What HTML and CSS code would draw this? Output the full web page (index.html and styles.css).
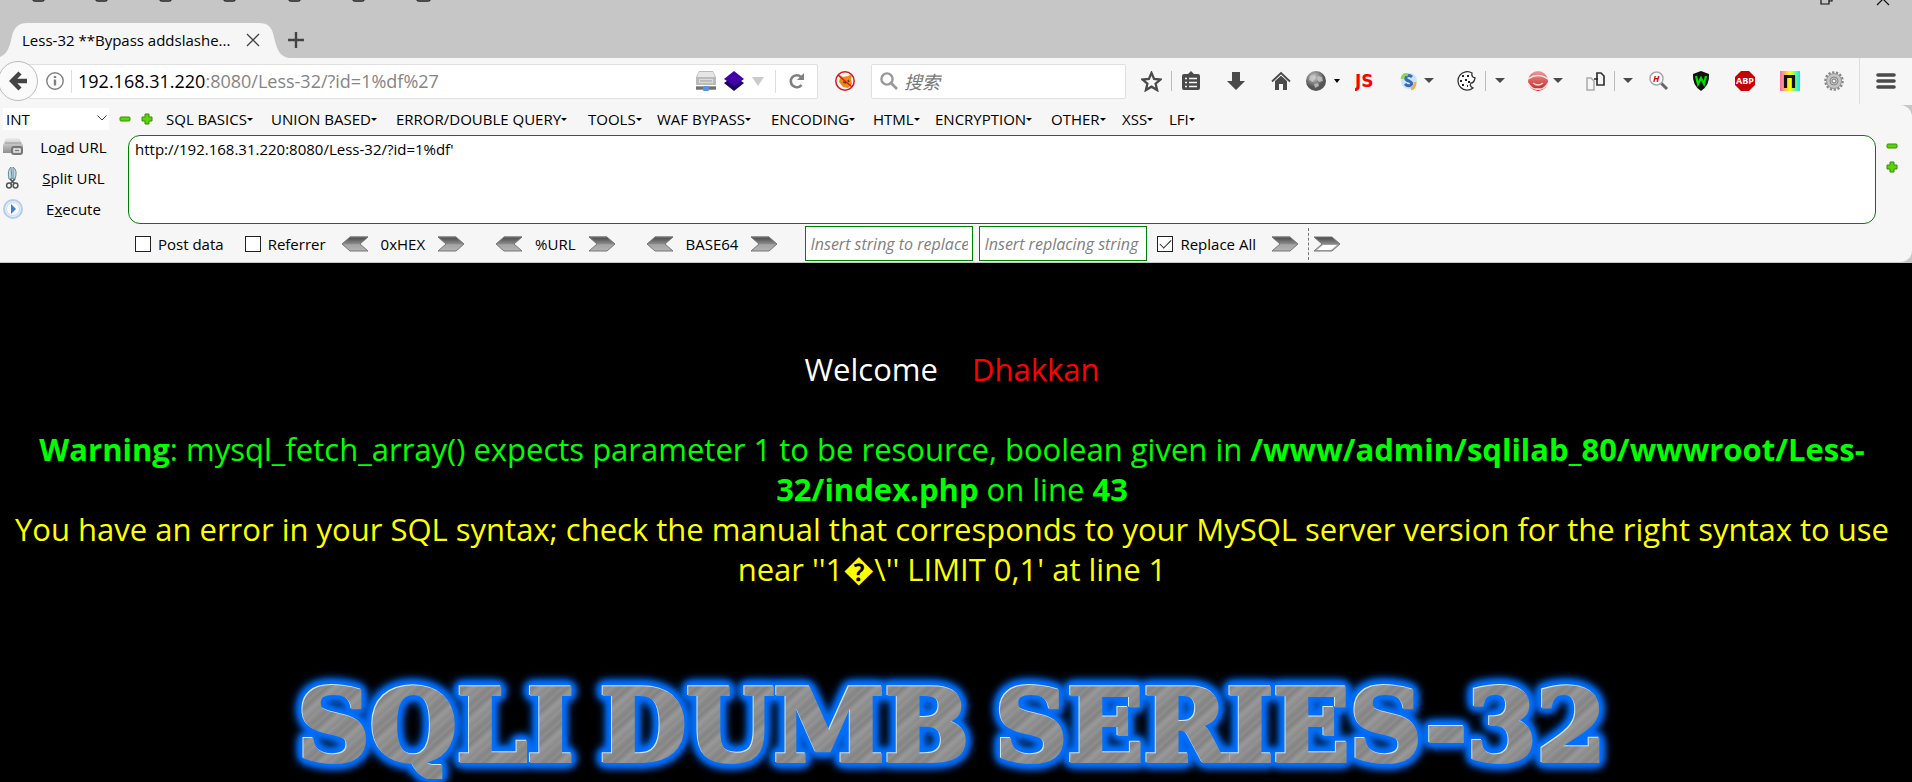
FILE: index.html
```html
<!DOCTYPE html>
<html lang="en">
<head>
<meta charset="utf-8">
<title>Less-32 **Bypass addslashes()**</title>
<link rel="stylesheet" href="styles.css">
</head>
<body>
<svg class="defs" aria-hidden="true">
  <defs>
    <linearGradient id="steel" x1="0" y1="0" x2="0" y2="1"><stop offset="0" stop-color="#484848"/><stop offset=".48" stop-color="#888"/><stop offset=".55" stop-color="#a4a4a4"/><stop offset="1" stop-color="#b4b4b4"/></linearGradient>
    <linearGradient id="metal" x1="0" y1="0" x2="0" y2="1"><stop offset="0" stop-color="#eee"/><stop offset="1" stop-color="#8d8d8d"/></linearGradient>
    <linearGradient id="redball" x1="0" y1="0" x2="0" y2="1"><stop offset="0" stop-color="#e99"/><stop offset="1" stop-color="#c4201c"/></linearGradient>
    <linearGradient id="rainbow"><stop offset="0" stop-color="#ff6bb0"/><stop offset=".5" stop-color="#ffff00"/><stop offset="1" stop-color="#00eaff"/></linearGradient>
    <radialGradient id="ball" cx=".4" cy=".3"><stop offset="0" stop-color="#ccc"/><stop offset="1" stop-color="#555"/></radialGradient>
    <symbol id="arrow" viewBox="0 0 28 16"><path d="M1 1H19L27 8L19 15H1L9 8Z" fill="url(#steel)" stroke="#777"/><path d="M1 1H19" stroke="#777"/></symbol>
    <symbol id="arrow-open" viewBox="0 0 28 16"><path d="M1 1H19L27 8L19 15H1L9 8Z" fill="url(#steel)" stroke="#777"/><path d="M10 9H24L18 14H4Z" fill="#fff"/></symbol>
    <symbol id="minus" viewBox="0 0 12 12"><rect x="1" y="4" width="10" height="4" rx="1" fill="#58d800" stroke="#3c8a10"/></symbol>
    <symbol id="plus" viewBox="0 0 12 12"><path d="M4 1H8V4H11V8H8V11H4V8H1V4H4Z" fill="#58d800" stroke="#3c8a10" stroke-linejoin="round"/></symbol>
    <symbol id="drop" viewBox="0 0 10 6"><path d="M0 0H10L5 5Z" fill="#4a4a4a"/></symbol>
  </defs>
</svg>

<header class="titlebar">
  <svg class="clipped-icons" width="400" height="3" viewBox="0 0 400 3" fill="none" stroke="#222" stroke-width="1.3"><path d="M1 0Q1 1 3 1H10Q12 1 12 0M64 0Q64 1 66 1H73Q75 1 75 0M128 0Q128 1 130 1H137Q139 1 139 0M192 0Q192 1 194 1H201Q203 1 203 0M257 0Q257 1 259 1H266Q268 1 268 0M321 0Q321 1 323 1H330Q332 1 332 0M385 0Q385 1 387 1H396Q398 1 398 0"/></svg>
  <svg class="window-controls" width="72" height="6" viewBox="0 0 72 6" fill="none" stroke="#111" stroke-width="1.2"><path d="M1 0V4H9V0M9 1H12V0M57 5L63 -1L69 5"/></svg>
  <div class="tab">
    <svg class="tab-shape" width="292" height="35" viewBox="0 0 292 35"><path d="M0 35V34C8 31 10 22 12 13C14 4 19 0 27 0H259C268 0 272 4 274 14C277 27 280 35 292 35Z" fill="#f6f6f6"/></svg>
    <span class="tab-title">Less-32 **Bypass addslashe...</span>
    <button class="plain" aria-label="Close tab"><svg width="14" height="14" viewBox="0 0 14 14"><path d="M1 1L13 13M13 1L1 13" stroke="#444" stroke-width="1.3"/></svg></button>
  </div>
  <button class="plain new-tab" aria-label="New tab"><svg width="16" height="16" viewBox="0 0 16 16"><path d="M8 0V16M0 8H16" stroke="#444" stroke-width="2.4"/></svg></button>
</header>

<nav class="navbar">
  <button class="plain back" aria-label="Back"><svg width="19" height="20" viewBox="0 0 19 20"><path d="M11 2L3 10L11 18M3 10H18" fill="none" stroke="#444" stroke-width="4.4"/></svg></button>
  <div class="urlbar">
    <button class="plain" aria-label="Site information"><svg width="18" height="18" viewBox="0 0 18 18"><circle cx="9" cy="9" r="8.2" fill="none" stroke="#808080" stroke-width="1.4"/><path d="M9 7.5V13.5M9 4V6" stroke="#808080" stroke-width="2.4"/></svg></button>
    <div class="url-text"><span>192.168.31.220</span>:8080/Less-32/?id=1%df%27</div>
    <div class="url-icons">
      <svg width="20" height="20" viewBox="0 0 20 20"><path d="M3 0H17L20 6V14H0V6Z" fill="#bbb"/><path d="M3 1H17L19 6H1Z" fill="#e6e6e6"/><path d="M3 8H17V12H3Z" fill="#ddd"/><path d="M4 10H16" stroke="#999"/><path d="M0 17H20" stroke="#707070" stroke-width="3.4"/><rect x="7" y="15" width="6" height="5" rx="1" fill="#5c93e0"/></svg>
      <svg width="20" height="20" viewBox="0 0 20 20"><path d="M0 12L10 5L20 12L10 20Z" fill="#1c0066"/><path d="M0 8L10 0L20 8L10 15Z" fill="#4400a8"/></svg>
      <svg width="12" height="9" viewBox="0 0 12 9"><path d="M0 0H12L6 9Z" fill="#ccc"/></svg>
      <i class="vline"></i>
      <svg width="16" height="16" viewBox="0 0 16 16"><path d="M12.5 12A6 6 0 1 1 12 4" fill="none" stroke="#808080" stroke-width="2.6"/><path d="M15 0V7H8Z" fill="#808080"/></svg>
    </div>
  </div>
  <button class="plain" aria-label="Proxy disabled"><svg width="20" height="20" viewBox="0 0 20 20"><path d="M5 7L3 3L8 6L13 5L17 3L16 8L17 13L13 17L8 16L4 11Z" fill="#f08a10"/><path d="M8 11L11 12M13 9L14 11" stroke="#633" stroke-width="1.5"/><circle cx="10" cy="10" r="9.2" fill="none" stroke="#d21820" stroke-width="1.5"/><path d="M3 4L17 16" stroke="#d21820" stroke-width="1.5"/></svg></button>
  <label class="search"><svg width="18" height="18" viewBox="0 0 18 18"><circle cx="7" cy="7" r="5.6" fill="none" stroke="#999" stroke-width="2.4"/><path d="M11 11L17 17" stroke="#999" stroke-width="2.6"/></svg><input type="text" placeholder="搜索" aria-label="Search"></label>
  <div class="tools">
    <svg width="21" height="21" viewBox="0 0 22 22"><path d="M11 2L13.7 8.3L20.4 8.9L15.3 13.3L16.9 20L11 16.4L5.1 20L6.7 13.3L1.6 8.9L8.3 8.3Z" fill="none" stroke="#4a4a4a" stroke-width="2.4"/></svg>
    <i class="vline"></i>
    <svg width="20" height="20" viewBox="0 0 20 20"><path d="M3 3H7L10 0L13 3H17Q19 3 19 5V17Q19 19 17 19H3Q1 19 1 17V5Q1 3 3 3Z" fill="#4a4a4a"/><path d="M4 7.500H6M4 11.500H6M4 15.500H6M8 7.500H16M8 11.500H16M8 15.500H16" stroke="#f6f6f6" stroke-width="1.6"/></svg>
    <svg width="20" height="20" viewBox="0 0 20 20"><path d="M6 1H14V10H19L10 19L1 10H6Z" fill="#4a4a4a"/></svg>
    <svg width="20" height="20" viewBox="0 0 20 20"><path d="M1 10.5L10 2L19 10.5" fill="none" stroke="#4a4a4a" stroke-width="1.8"/><path d="M4 10L10 4.8L16 10V19H12V13H8V19H4Z" fill="#4a4a4a"/></svg>
    <svg width="20" height="20" viewBox="0 0 20 20"><circle cx="10" cy="10" r="10" fill="url(#ball)"/><path d="M4 5L8 4L10 7L7 11L3 9ZM12 5L16 6L17 10L13 11L11 8ZM8 13L12 12L13 15L9 17Z" fill="#ccc" opacity=".75"/></svg>
    <svg width="6" height="4" viewBox="0 0 6 4"><path d="M0 0H6L3 4Z"/></svg>
    <svg width="22" height="20" viewBox="0 0 22 20"><text x="0" y="16" class="t-js">JS</text></svg>
    <svg width="18" height="20" viewBox="0 0 18 20"><circle cx="9" cy="10" r="8" fill="#c9e4ff"/><path d="M12 6Q9 3 6 6Q5 9 9 10Q13 12 11 14Q8 16 5 13" fill="none" stroke="#3c68b4" stroke-width="3"/><path d="M8 4Q3 2 2 8" fill="none" stroke="#7ee04e" stroke-width="3"/><path d="M11 18Q15 17 15 11" fill="none" stroke="#f4ae48" stroke-width="3"/></svg>
    <svg width="10" height="6"><use href="#drop"/></svg>
    <svg width="20" height="20" viewBox="0 0 20 20"><path d="M16 2A9.2 9.2 0 1 0 17 17Q13 15 15 12Q18 12 19 7Q15 6 16 2Z" fill="#fff" stroke="#333" stroke-width="1.3"/><path d="M6 5H8M11 5H13M4 10H6M9 9H11M6 14H8M12 11H14M11 15H12" stroke="#222" stroke-width="1.8"/></svg>
    <i class="vline"></i>
    <svg width="10" height="6"><use href="#drop"/></svg>
    <svg width="20" height="20" viewBox="0 0 20 20"><circle cx="10" cy="10" r="10" fill="url(#redball)"/><path d="M0 8Q10 1 20 8M0 12Q4 19 10 18Q16 19 20 12" fill="none" stroke="#f6e4e4" stroke-width="1.5"/><path d="M5 12Q10 16 15 12" fill="none" stroke="#f6d8d8" stroke-width="1.5"/></svg>
    <svg width="10" height="6"><use href="#drop"/></svg>
    <svg width="19" height="20" viewBox="0 0 19 20" fill="none"><path d="M1 7H5L8 10V19H1Z" stroke="#aaa" stroke-width="1.5"/><path d="M11 2H15L18 5V14H11Z" stroke="#333" stroke-width="1.7"/><path d="M8 8H12" stroke="#222" stroke-width="1.5"/></svg>
    <i class="vline"></i>
    <svg width="10" height="6"><use href="#drop"/></svg>
    <svg width="20" height="20" viewBox="0 0 20 20"><path d="M12 12L18 18" stroke="#666" stroke-width="3"/><circle cx="7.500" cy="7.500" r="6.500" fill="#fff" stroke="#aaa" stroke-width="1.5"/><text x="4" y="11" class="t-h">H</text></svg>
    <svg width="18" height="20" viewBox="0 0 18 20"><path d="M9 0L17 3Q18 14 9 20Q0 14 1 3Z" fill="#111"/><path d="M4 5L6 13L9 7L12 13L14 5" fill="none" stroke="#00e000" stroke-width="2.2"/></svg>
    <svg width="20" height="20" viewBox="0 0 20 20"><path d="M6 0H14L20 6V14L14 20H6L0 14V6Z" fill="#c70000"/><text x="10" y="13" class="t-abp">ABP</text></svg>
    <svg width="20" height="20" viewBox="0 0 20 20"><rect width="20" height="20" fill="url(#rainbow)"/><path d="M5.500 17V5.500H13.500V17" fill="none" stroke="#111" stroke-width="3.2"/></svg>
    <svg width="20" height="20" viewBox="0 0 20 20"><circle cx="10" cy="10" r="8.300" fill="none" stroke="#888" stroke-width="3" stroke-dasharray="2.2 1.5"/><circle cx="10" cy="10" r="7.500" fill="#c4c4c4" stroke="#999"/><circle cx="10" cy="10" r="4" fill="none" stroke="#888"/><circle cx="10" cy="10" r="2" fill="#f6f6f6" stroke="#777"/></svg>
    <i class="vline tall"></i>
    <svg width="20" height="18" viewBox="0 0 20 18"><path d="M2 3H18M2 9H18M2 15H18" stroke="#4a4a4a" stroke-width="3.6" stroke-linecap="round"/></svg>
  </div>
</nav>

<section class="hackbar-wrap">
<div class="hackbar">
  <div class="menu-row">
    <select aria-label="Injection type"><option>INT</option></select>
    <button class="plain" aria-label="Decrease"><svg width="12" height="12"><use href="#minus"/></svg></button>
    <button class="plain" aria-label="Increase"><svg width="12" height="12"><use href="#plus"/></svg></button>
    <button class="plain menu">SQL BASICS</button>
    <button class="plain menu">UNION BASED</button>
    <button class="plain menu">ERROR/DOUBLE QUERY</button>
    <button class="plain menu">TOOLS</button>
    <button class="plain menu">WAF BYPASS</button>
    <button class="plain menu">ENCODING</button>
    <button class="plain menu">HTML</button>
    <button class="plain menu">ENCRYPTION</button>
    <button class="plain menu">OTHER</button>
    <button class="plain menu">XSS</button>
    <button class="plain menu">LFI</button>
  </div>
  <div class="edit-row">
    <div class="actions">
      <button class="plain action"><svg width="20" height="20" viewBox="0 0 20 20"><path d="M3 1H16L20 8V16H0V8Z" fill="url(#metal)"/><path d="M2 6H18" stroke="#999"/><rect x="8" y="9" width="12" height="9" rx="3" fill="#777"/><path d="M11 15V12H17V15Z" fill="none" stroke="#eee" stroke-width="1.5"/></svg><span>Lo<u>a</u>d URL</span></button>
      <button class="plain action"><svg width="20" height="22" viewBox="0 0 20 22"><path d="M8 0Q4 3 6 12H9ZM10 0Q15 3 12 12H10Z" fill="#b4dcea" stroke="#6e8994"/><path d="M7 12L12 17M12 12L7 17" stroke="#555" stroke-width="1.6"/><circle cx="6" cy="18.500" r="2.400" fill="none" stroke="#555" stroke-width="1.5"/><circle cx="12.500" cy="18.500" r="2.400" fill="none" stroke="#555" stroke-width="1.5"/></svg><span><u>S</u>plit URL</span></button>
      <button class="plain action"><svg width="20" height="20" viewBox="0 0 20 20"><circle cx="10" cy="10" r="9" fill="#e8f0fa" stroke="#b0cdf0" stroke-width="2"/><circle cx="10" cy="10" r="6.500" fill="#f8fbff" stroke="#d0dcea"/><path d="M8 5L13 10L8 15Z" fill="#3f7fce"/></svg><span>E<u>x</u>ecute</span></button>
    </div>
    <textarea aria-label="URL" spellcheck="false">http://192.168.31.220:8080/Less-32/?id=1%df'</textarea>
    <div class="resize">
      <button class="plain" aria-label="Shrink"><svg width="12" height="12"><use href="#minus"/></svg></button>
      <button class="plain" aria-label="Grow"><svg width="12" height="12"><use href="#plus"/></svg></button>
    </div>
  </div>
  <div class="option-row">
    <label class="check"><input type="checkbox">Post data</label>
    <label class="check"><input type="checkbox">Referrer</label>
    <div class="codec"><button class="plain flip" aria-label="Decode hex"><svg width="28" height="16"><use href="#arrow"/></svg></button><span>0xHEX</span><button class="plain" aria-label="Encode hex"><svg width="28" height="16"><use href="#arrow"/></svg></button></div>
    <div class="codec"><button class="plain flip" aria-label="Decode URL"><svg width="28" height="16"><use href="#arrow"/></svg></button><span>%URL</span><button class="plain" aria-label="Encode URL"><svg width="28" height="16"><use href="#arrow"/></svg></button></div>
    <div class="codec"><button class="plain flip" aria-label="Decode base64"><svg width="28" height="16"><use href="#arrow"/></svg></button><span>BASE64</span><button class="plain" aria-label="Encode base64"><svg width="28" height="16"><use href="#arrow"/></svg></button></div>
    <input class="swap" type="text" placeholder="Insert string to replace" aria-label="String to replace">
    <input class="swap" type="text" placeholder="Insert replacing string" aria-label="Replacing string">
    <label class="check"><input type="checkbox" checked>Replace All</label>
    <button class="plain" aria-label="Replace"><svg width="28" height="16"><use href="#arrow"/></svg></button>
    <button class="plain dashed" aria-label="Replace back"><svg width="28" height="16"><use href="#arrow-open"/></svg></button>
  </div>
</div>
</section>

<main class="page">
  <p class="welcome"><span>Welcome</span><span class="name">Dhakkan</span></p>
  <p class="warning"><b>Warning</b>: mysql_fetch_array() expects parameter 1 to be resource, boolean given in <b>/www/admin/sqlilab_80/wwwroot/Less-32/index.php</b> on line <b>43</b></p>
  <p class="error">You have an error in your SQL syntax; check the manual that corresponds to your MySQL server version for the right syntax to use near ''1&#xFFFD;\'' LIMIT 0,1' at line 1</p>
  <h1 class="logo"><span>SQLI</span><span>DUMB</span><span>SERIES-32</span></h1>
</main>
</body>
</html>
```
FILE: styles.css
```css
* { box-sizing: border-box; }
html, body { height: 100%; }
body {
  margin: 0;
  display: flex;
  flex-direction: column;
  overflow: hidden;
  background: #000;
  color: #000;
  font-family: "Open Sans", "Noto Sans CJK SC", sans-serif;
  font-size: 15px;
}
svg { display: block; flex: none; }
.defs { position: absolute; width: 0; height: 0; }
p { margin: 0; }
.plain { appearance: none; border: 0; margin: 0; padding: 0; background: none; color: inherit; font: inherit; white-space: nowrap; }
.vline { width: 1px; height: 20px; background: #bbb; }

.titlebar { position: relative; display: flex; align-items: flex-end; height: 58px; flex: none; background: #c6c6c6; }
.clipped-icons { position: absolute; left: 32px; top: 0; }
.window-controls { position: absolute; right: 20px; top: 0; }
.tab { position: relative; display: flex; align-items: center; justify-content: space-between; width: 288px; height: 35px; padding: 0 28px 2px 22px; }
.tab-shape { position: absolute; left: 0; top: 0; }
.tab-title, .tab .plain { position: relative; }
.new-tab { align-self: flex-end; padding-bottom: 10px; }

.navbar { display: flex; align-items: center; height: 47px; padding-bottom: 1px; flex: none; background: #f6f6f6; }
.back { display: grid; place-items: center; flex: none; width: 40px; height: 40px; margin-left: -2px; border: 1px solid #bbb; border-radius: 50%; background: #fafafa; position: relative; }
.urlbar { display: flex; align-items: center; flex: 1; height: 35px; margin: 0 17px 0 -10px; padding: 0 12px 0 17px; background: #fff; border: 1px solid #e0e0e0; border-radius: 2px; }
.url-text { flex: 1; margin-left: 7px; padding-left: 6px; border-left: 1px solid #ddd; color: #858585; font-size: 18px; line-height: 23px; white-space: nowrap; }
.url-text span { color: #000; }
.url-icons { display: flex; align-items: center; gap: 8px; }
.url-icons .vline { margin: 0 5px 0 3px; height: 23px; background: #ddd; }
.search { display: flex; align-items: center; gap: 4px; width: 255px; height: 35px; margin: 0 15px 0 16px; padding-left: 8px; background: #fff; border: 1px solid #e0e0e0; border-radius: 2px; }
.search input { width: 100%; border: 0; outline: 0; background: none; font: italic 18px "Noto Sans CJK SC", sans-serif; }
.search input::placeholder { color: #777; }
.tools {
  display: grid;
  align-items: center;
  height: 100%;
  grid-template-columns: 30px 10px 45px 45px 35px 28px 21px 45px 24px 32px 29px 10px 33px 25px 33px 28px 9px 26px 43px 43px 45px 44px 35px 17px 36px;
}
.tools .tall { height: 46px; background: #ddd; }
.t-js { font: bold 17px "DejaVu Sans", sans-serif; fill: #f00; }
.t-h { font: italic bold 9px "Open Sans", sans-serif; fill: #e00; }
.t-abp { font: bold 9px "Open Sans", sans-serif; fill: #fff; text-anchor: middle; }

.hackbar-wrap { flex: none; background: #c6c6c6; }
.hackbar { padding: 3px 0 0; background: #f6f6f6; border-bottom: 1px solid #c6c6c6; border-radius: 0 12px 12px 0; }
.menu-row {
  display: grid;
  align-items: center;
  height: 22px;
  padding-left: 3px;
  grid-template-columns: 116px 22px 25px 105px 125px 192px 69px 114px 102px 62px 116px 71px 47px 60px;
}
.menu-row select {
  width: 106px; height: 22px; padding: 0 3px; border: 0; appearance: none; color: #000; font: inherit; line-height: 20px;
  background: #fff url("data:image/svg+xml,%3Csvg xmlns='http://www.w3.org/2000/svg' width='10' height='6'%3E%3Cpath d='M0.500 .5L5 5L9.500 .5' fill='none' stroke='%23444'/%3E%3C/svg%3E") 94px 7px no-repeat;
}
.menu { display: flex; align-items: center; line-height: 20px; }
.menu::after { content: ""; border: 3px solid transparent; border-top-color: #000; border-bottom: 0; }
.edit-row { display: flex; margin-top: 5px; }
.actions { display: flex; flex-direction: column; width: 128px; height: 89px; padding-left: 3px; }
.action { display: grid; grid-template-columns: 20px 101px; align-items: center; height: 31px; flex: none; }
.action:first-child { margin-top: -4px; }
textarea { flex: 1; height: 89px; padding: 3px 6px; resize: none; outline: 0; border: 1px solid #008000; border-radius: 12px; background: #fff; color: #000; font: inherit; line-height: 20px; }
.resize { display: flex; flex-direction: column; gap: 9px; width: 36px; padding: 5px 0 0 10px; }
.option-row { display: flex; align-items: center; height: 38px; padding: 1px 0 0 135px; line-height: 20px; }
.check { display: flex; align-items: center; gap: 7px; margin-right: 21px; white-space: nowrap; }
.check input { display: grid; place-items: center; appearance: none; width: 16px; height: 16px; margin: 0; border: 1px solid #222; background: #fff; }
.check input:checked::before { content: ""; width: 10px; height: 5px; border: solid #222; border-width: 0 0 1px 1px; transform: rotate(-45deg) translate(1px, -1px); }
.codec { display: flex; align-items: center; gap: 12px; margin-right: 30px; }
.check + .codec { margin-left: -6px; }
.flip svg { transform: scaleX(-1); }
.swap { width: 168px; height: 35px; margin-right: 6px; padding: 0 4px; border: 1px solid #008000; border-radius: 0; outline: 0; background: #fff; font: inherit; font-size: 16px; }
.codec + .swap { margin-left: -3px; }
.swap + .check { margin: 0 15px 0 4px; }
.swap::placeholder { font-style: italic; color: #808080; }
.dashed { display: flex; align-items: center; height: 32px; margin-left: 9px; padding-left: 4px; border-left: 1px dashed #777; }

.page { flex: 1; min-height: 0; padding: 86px 16px 0 8px; overflow: hidden; text-align: center; font-size: 31px; line-height: 40px; background: #000; }
.welcome { display: flex; justify-content: center; gap: 34px; margin-bottom: 40px; color: #fff; }
.name { color: #f00; }
.warning { color: #0f0; }
.error { color: #ff0; }
.logo {
  display: flex;
  justify-content: center;
  gap: 26px;
  margin: 84px 0 0;
  font: bold 100px/106px "DejaVu Serif", serif;
  color: transparent;
  filter: drop-shadow(-1px -1px 0 #d6e8f4) drop-shadow(0 0 3px #0070ff) drop-shadow(0 0 3px #0070ff) drop-shadow(0 0 3px #0070ff) drop-shadow(0 0 3px #0070ff);
}
.logo span {
  background: repeating-linear-gradient(138deg, #868686 0 2px, #8e8e8e 4px, #828282 7px, #999 12px, #8c8c8c 17px, #939393 19px, #868686 23px);
  background-clip: text;
  -webkit-background-clip: text;
  -webkit-text-stroke: 4px transparent;
}
```
